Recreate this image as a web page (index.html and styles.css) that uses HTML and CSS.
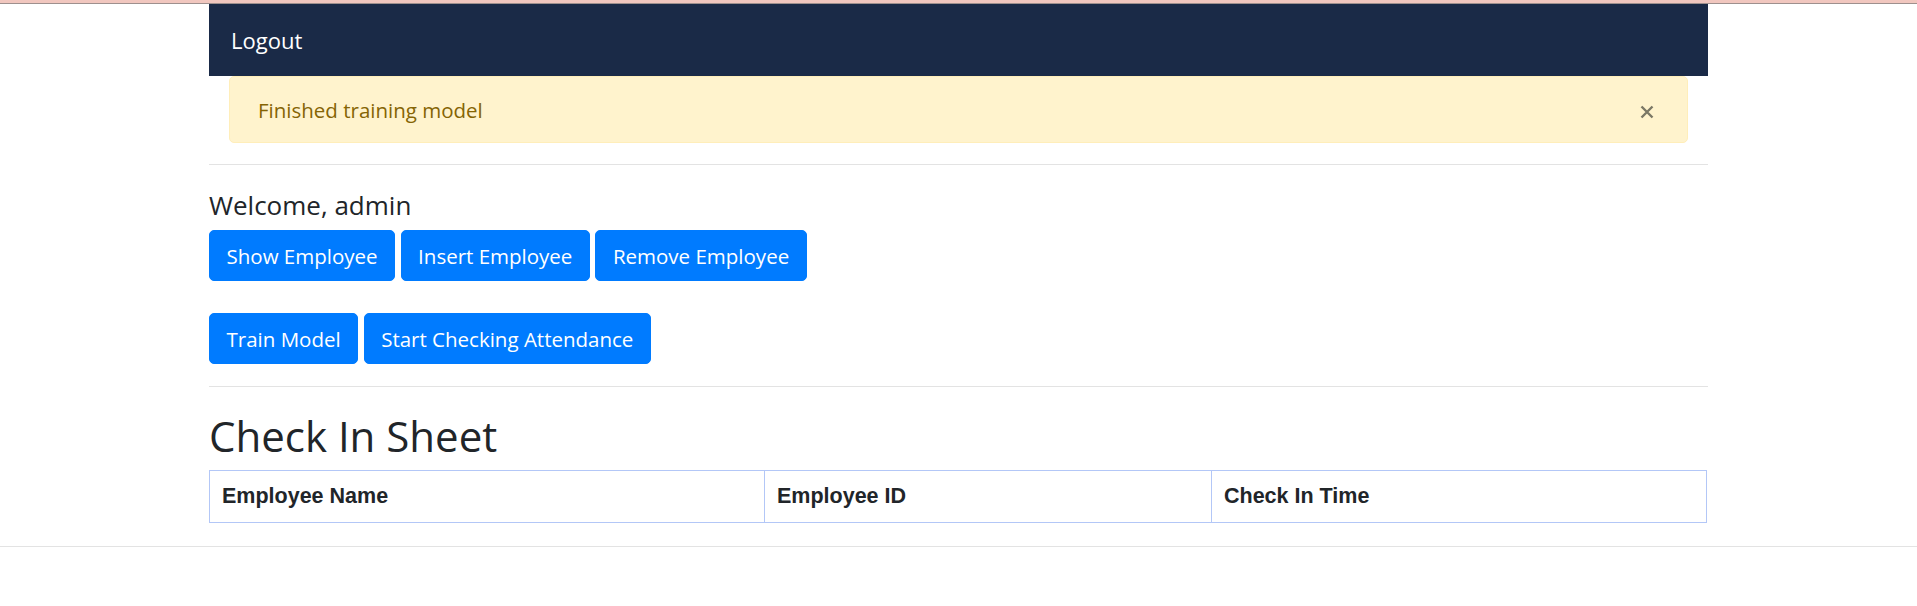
FILE: index.html
```html
<!DOCTYPE html>
<html lang="en">
<head>
<meta charset="utf-8">
<title>Attendance Admin</title>
<link rel="stylesheet" href="styles.css">
</head>
<body>
<div class="topstrip"></div>
<div class="container">
  <nav class="navbar">
    <a class="nav-link" href="#">Logout</a>
  </nav>
  <div class="alert">
    <span class="alert-text">Finished training model</span>
    <button class="close" type="button" aria-label="Close">
      <svg width="14" height="14" viewBox="0 0 14 14"><path d="M1.5 1.5 L12.5 12.5 M12.5 1.5 L1.5 12.5" stroke="currentColor" stroke-width="2.4" stroke-linecap="butt"/></svg>
    </button>
  </div>
  <hr class="rule">
  <h5 class="welcome">Welcome, admin</h5>
  <div class="btn-row">
    <button class="btn">Show Employee</button>
    <button class="btn">Insert Employee</button>
    <button class="btn">Remove Employee</button>
  </div>
  <div class="btn-row second">
    <button class="btn">Train Model</button>
    <button class="btn">Start Checking Attendance</button>
  </div>
  <hr class="rule rule-low">
  <h2 class="title">Check In Sheet</h2>
  <table class="sheet">
    <colgroup>
      <col class="c-name">
      <col class="c-id">
      <col class="c-time">
    </colgroup>
    <thead>
      <tr>
        <th>Employee Name</th>
        <th>Employee ID</th>
        <th>Check In Time</th>
      </tr>
    </thead>
  </table>
</div>
<hr class="page-rule">
</body>
</html>
```

FILE: styles.css
```css
* { box-sizing: border-box; }

body {
  margin: 0;
  background: #ffffff;
  font-family: "Open Sans", "Noto Sans", sans-serif;
  font-size: 20.5px;
  color: #212529;
}

.topstrip {
  height: 4px;
  background: #f1c7bf;
  border-bottom: 1px solid #9e908e;
}

.container {
  width: 1499px;
  margin: 0 auto;
}

.navbar {
  height: 72px;
  background: #1a2a47;
  display: flex;
  align-items: center;
  padding: 0 22px;
}

.nav-link {
  color: #ffffff;
  text-decoration: none;
  font-size: 22px;
}

.alert {
  margin: 0 20px;
  height: 67px;
  background: #fff3cd;
  border: 1px solid #ffeeba;
  border-radius: 5px;
  color: #856404;
  display: flex;
  align-items: center;
  justify-content: space-between;
  padding: 0 33px 0 28px;
}

.close {
  background: none;
  border: 0;
  padding: 0;
  margin-top: 5px;
  color: #7b7765;
  display: flex;
  cursor: pointer;
}

.rule {
  margin: 21px 0 0;
  border: 0;
  border-top: 1px solid #e3e3e3;
  height: 0;
}

.welcome {
  margin: 25px 0 10px;
  font-size: 26px;
  font-weight: 500;
  line-height: 30px;
}

.btn-row {
  display: flex;
  gap: 5.5px;
}

.btn-row.second {
  margin-top: 32px;
}

.btn {
  height: 51px;
  padding: 0 16.5px;
  background: #007bff;
  color: #ffffff;
  border: 1px solid #007bff;
  border-radius: 5px;
  font-family: inherit;
  font-size: 20.5px;
  line-height: 30px;
  cursor: pointer;
}

.rule-low {
  margin-top: 22px;
}

.title {
  margin: 25px 0 10px;
  font-size: 42px;
  font-weight: 500;
  line-height: 48px;
}

.sheet {
  width: 1497px;
  border-collapse: collapse;
  table-layout: fixed;
}

.c-name { width: 555px; }
.c-id { width: 447px; }
.c-time { width: 495px; }

.sheet th {
  border: 1px solid #b3c7f7;
  padding: 10px 12px;
  line-height: 31px;
  text-align: left;
  font-family: "Liberation Sans", Arial, sans-serif;
  font-size: 21.5px;
  font-weight: bold;
  color: #212529;
}

.page-rule {
  margin: 23px 0 0;
  border: 0;
  border-top: 1px solid #e3e3e3;
  height: 0;
}
```
